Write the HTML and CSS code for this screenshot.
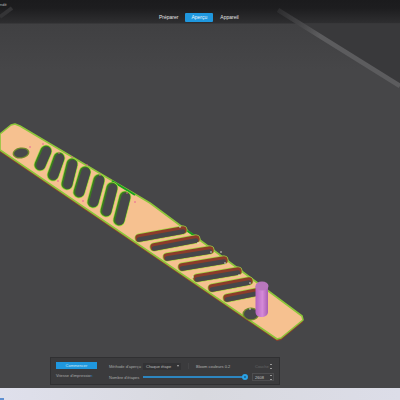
FILE: index.html
```html
<!DOCTYPE html>
<html lang="fr">

<head>
  <meta charset="UTF-8">
  <meta name="viewport" content="width=device-width, initial-scale=1.0">
  <title>Aperçu</title>
  <link rel="stylesheet" href="styles.css">
</head>

<body>

  <div class="viewport">
    <svg class="scene" width="400" height="388" viewBox="0 0 400 388">
      <defs>
        <linearGradient id="cyl" x1="0" x2="1" y1="0" y2="0">
          <stop offset="0" stop-color="#b565c0"/>
          <stop offset="0.55" stop-color="#d58ad8"/>
          <stop offset="1" stop-color="#a95eb2"/>
        </linearGradient>
        <linearGradient id="edge" gradientUnits="userSpaceOnUse" x1="278" y1="10" x2="320" y2="36">
          <stop offset="0" stop-color="#2c2c2e"/>
          <stop offset="1" stop-color="#5c5c5e"/>
        </linearGradient>
        <polygon id="plate" points="0,134 11,125 15,124 20,126 150,203 302,316 303,320 281,338 277,339 0,150"/>
        <g id="slotsA">
          <line x1="46" y1="151" x2="40" y2="165"/>
          <line x1="59" y1="158" x2="53" y2="175"/>
          <line x1="72" y1="164" x2="67" y2="184"/>
          <line x1="85" y1="172" x2="79" y2="192"/>
          <line x1="99" y1="180" x2="93" y2="202"/>
          <line x1="112" y1="188" x2="106" y2="211"/>
          <line x1="125" y1="197" x2="119" y2="220"/>
        </g>
        <g id="slotsB">
          <line x1="139" y1="238" x2="183" y2="230"/>
          <line x1="154" y1="247" x2="196" y2="239"/>
          <line x1="167" y1="257" x2="210" y2="250"/>
          <line x1="182" y1="267" x2="224" y2="260"/>
          <line x1="197" y1="278" x2="238" y2="271"/>
          <line x1="212" y1="288" x2="249" y2="281"/>
          <line x1="227" y1="298" x2="262" y2="291"/>
        </g>
      </defs>
      <!-- plateau -->
      <polygon class="bed-far" points="300,24 400,24 400,86"/>
      <line class="bed-edge" x1="278" y1="10" x2="400" y2="86"/>
      <line class="bed-edge-left" x1="0" y1="17" x2="12" y2="8"/>
      <!-- plaque -->
      <use href="#plate" class="plate-side"/>
      <use href="#plate" class="plate-top"/>
      <line class="plate-seam" x1="112" y1="181" x2="135" y2="195"/>
      <line class="plate-seam" x1="183" y1="228" x2="198" y2="238"/>
      <!-- trous -->
      <ellipse class="hole-rim" cx="21" cy="153" rx="8.5" ry="5.5" transform="rotate(-8 21 153)"/>
      <ellipse class="hole" cx="21" cy="153" rx="7" ry="4.2" transform="rotate(-8 21 153)"/>
      <ellipse class="hole-rim" cx="251" cy="314" rx="8.5" ry="6.5"/>
      <ellipse class="hole" cx="251" cy="314" rx="7" ry="5.2"/>
      <!-- fentes -->
      <use href="#slotsA" class="slot-rim wide"/>
      <use href="#slotsA" class="slot-wall wide-in"/>
      <use href="#slotsA" class="slot-hole wide-hole"/>
      <use href="#slotsB" class="slot-rim thin"/>
      <use href="#slotsB" class="slot-wall thin-in"/>
      <use href="#slotsB" class="slot-hole thin-hole"/>
      <!-- points de couture -->
      <g class="seams">
        <circle cx="43" cy="144" r="0.8"/><circle cx="30" cy="147" r="0.8"/><circle cx="59" cy="153" r="0.8"/>
        <circle cx="72" cy="157" r="0.8"/><circle cx="87" cy="165" r="0.8"/><circle cx="100" cy="175" r="0.8"/>
        <circle cx="127" cy="193" r="0.8"/><circle cx="135" cy="202" r="0.8"/><circle cx="83" cy="201" r="0.8"/>
        <circle cx="58" cy="181" r="0.8"/>
      </g>
      <g class="seams light">
        <circle cx="180" cy="227" r="0.8"/><circle cx="198" cy="243" r="0.8"/><circle cx="211" cy="252" r="0.8"/>
        <circle cx="221" cy="252" r="0.8"/><circle cx="225" cy="263" r="0.8"/><circle cx="193" cy="277" r="0.8"/>
        <circle cx="239" cy="275" r="0.8"/><circle cx="250" cy="283" r="0.8"/><circle cx="250" cy="309" r="0.8"/>
      </g>
      <!-- colonne -->
      <path class="cyl-body" d="M255.5 286V312C255.5 315 258 317 261.5 317S268 315 268 312V286Z"/>
      <ellipse class="cyl-top" cx="262" cy="286" rx="6.5" ry="4.5"/>
    </svg>

    <span class="app-title">ndé</span>

    <nav class="tabs">
      <a class="tab" href="#">Préparer</a>
      <a class="tab active" href="#">Aperçu</a>
      <a class="tab" href="#">Appareil</a>
    </nav>

    <div class="panel">
      <div class="panel-left">
        <button class="start">Commencer</button>
        <span class="label speed">Vitesse d'impressio<b>n</b></span>
      </div>
      <div class="panel-right">
        <div class="row">
          <span class="label method">Méthode d'aperçu</span>
          <span class="select">Chaque étape <i class="caret"></i></span>
          <i class="tick"></i>
          <span class="label tool">Bloom couleurs 0.2</span>
          <span class="stepper off">Couche <i class="arrows"></i></span>
        </div>
        <div class="row">
          <span class="label method">Nombre d'étapes</span>
          <span class="slider"><i class="knob"></i></span>
          <span class="stepper">2608 <i class="arrows"></i></span>
        </div>
      </div>
    </div>
  </div>

  <div class="desk"><i class="desk-icon"></i></div>

</body>

</html>
```

FILE: styles.css
```css
html,
body {
  margin: 0;
  height: 400px;
  overflow: hidden;
}

body {
  font-family: "Liberation Sans", Arial, sans-serif;
  background: #dcdde8;
  display: flex;
  flex-direction: column;
}

.viewport {
  position: relative;
  height: 388px;
  background: linear-gradient(#1b1b1d 0, #1d1d1f 8px, #2e2e30 23px, #404042 24px, #464648 70px, #464648 100%);
}

.scene {
  position: absolute;
  top: 0;
  left: 0;
  filter: blur(0.3px);
}

.bed-far {
  fill: #39393b;
}

.bed-edge {
  stroke: url(#edge);
  stroke-width: 4.5;
}

.bed-edge-left {
  stroke: #343436;
  stroke-width: 4;
}

.plate-side {
  fill: #8c3f2c;
  transform: translateY(2px);
}

.plate-top {
  fill: #f6c190;
  stroke: #8cc63a;
  stroke-width: 1.6;
  stroke-linejoin: round;
}

.plate-seam {
  stroke: #17a11e;
  stroke-width: 2;
}

.hole-rim {
  fill: #6f8a2c;
}

.hole {
  fill: #48484b;
}

.slot-rim,
.slot-wall,
.slot-hole {
  fill: none;
  stroke-linecap: round;
}

.slot-rim {
  stroke: #a0d840;
}

.slot-wall {
  stroke: #3a7a20;
}

.slot-hole {
  stroke: #47474a;
}

.wide {
  stroke-width: 12.5;
}

.wide-in {
  stroke-width: 11;
}

.wide-hole {
  stroke-width: 9;
  transform: translate(0.7px, 0.3px);
}

.thin {
  stroke-width: 9;
}

.thin-in {
  stroke-width: 7.4;
  stroke: #8c3c2a;
}

.thin-hole {
  stroke-width: 4.4;
  transform: translateY(1.5px);
}

.seams {
  fill: #e85a9a;
}

.seams.light {
  fill: #e8e4d8;
}

.cyl-body {
  fill: url(#cyl);
}

.cyl-top {
  fill: #b877bd;
}

.app-title {
  position: absolute;
  top: 2px;
  left: 0;
  font-size: 4px;
  line-height: 6px;
  color: #b8b8b8;
}

.tabs {
  position: absolute;
  top: 13px;
  left: 153px;
  display: flex;
  align-items: center;
  gap: 1px;
}

.tab {
  font-size: 5px;
  line-height: 9px;
  padding: 0 6px;
  color: #e4e4e4;
  text-decoration: none;
  border-radius: 1px;
}

.tab.active {
  background: #1f97de;
  color: #e8f4fb;
}

.panel {
  position: absolute;
  top: 357px;
  left: 50px;
  width: 230px;
  height: 28px;
  box-sizing: border-box;
  padding: 4px 5px;
  background: #3b3b3d;
  border: 1px solid #303032;
  display: flex;
  gap: 12px;
  font-size: 4px;
  color: #a9a9a9;
}

.panel-left {
  width: 41px;
  display: flex;
  flex-direction: column;
  gap: 3px;
}

.start {
  height: 8px;
  padding: 0;
  border: none;
  background: #1f97de;
  color: #cfe6f4;
  font: inherit;
}

.label {
  white-space: nowrap;
}

.speed {
  line-height: 8px;
}

.label b {
  color: #2d86c0;
  font-weight: normal;
}

.panel-right {
  flex: 1;
  display: flex;
  flex-direction: column;
  gap: 3px;
}

.row {
  display: flex;
  align-items: center;
  height: 8px;
}

.method {
  width: 34px;
  flex: none;
}

.select {
  width: 38px;
  height: 7px;
  flex: none;
  box-sizing: border-box;
  padding-left: 3px;
  display: flex;
  align-items: center;
  justify-content: space-between;
  background: #333335;
  color: #bdbdbd;
}

.caret {
  margin-right: 2px;
  border-left: 1.5px solid transparent;
  border-right: 1.5px solid transparent;
  border-top: 2px solid #aaa;
}

.tick {
  width: 1px;
  height: 6px;
  margin: 0 7px;
  background: #444446;
}

.tool {
  color: #b4b4b4;
}

.stepper {
  width: 22px;
  height: 8px;
  margin-left: auto;
  padding-left: 2px;
  box-sizing: border-box;
  display: flex;
  align-items: center;
  justify-content: space-between;
  border: 1px solid #4d4d4f;
  color: #c4c4c4;
}

.stepper.off {
  color: #666;
  border-color: transparent;
}

.arrows {
  width: 2px;
  height: 5px;
  margin-right: 1px;
  border-top: 1px solid #999;
  border-bottom: 1px solid #999;
  box-sizing: border-box;
}

.slider {
  position: relative;
  width: 102px;
  height: 2px;
  background: #2d86c0;
}

.knob {
  position: absolute;
  top: -2px;
  right: -3px;
  width: 6px;
  height: 6px;
  box-sizing: border-box;
  border: 2px solid #2aa3e6;
  border-radius: 50%;
  background: #1a5f8c;
}

.desk {
  position: relative;
  height: 12px;
  background: linear-gradient(90deg, #dfe0ec, #d8d9df 50%, #dcdde8);
}

.desk-icon {
  position: absolute;
  left: 0;
  bottom: 0;
  width: 4px;
  height: 2px;
  background: #5f8fd0;
}
```
